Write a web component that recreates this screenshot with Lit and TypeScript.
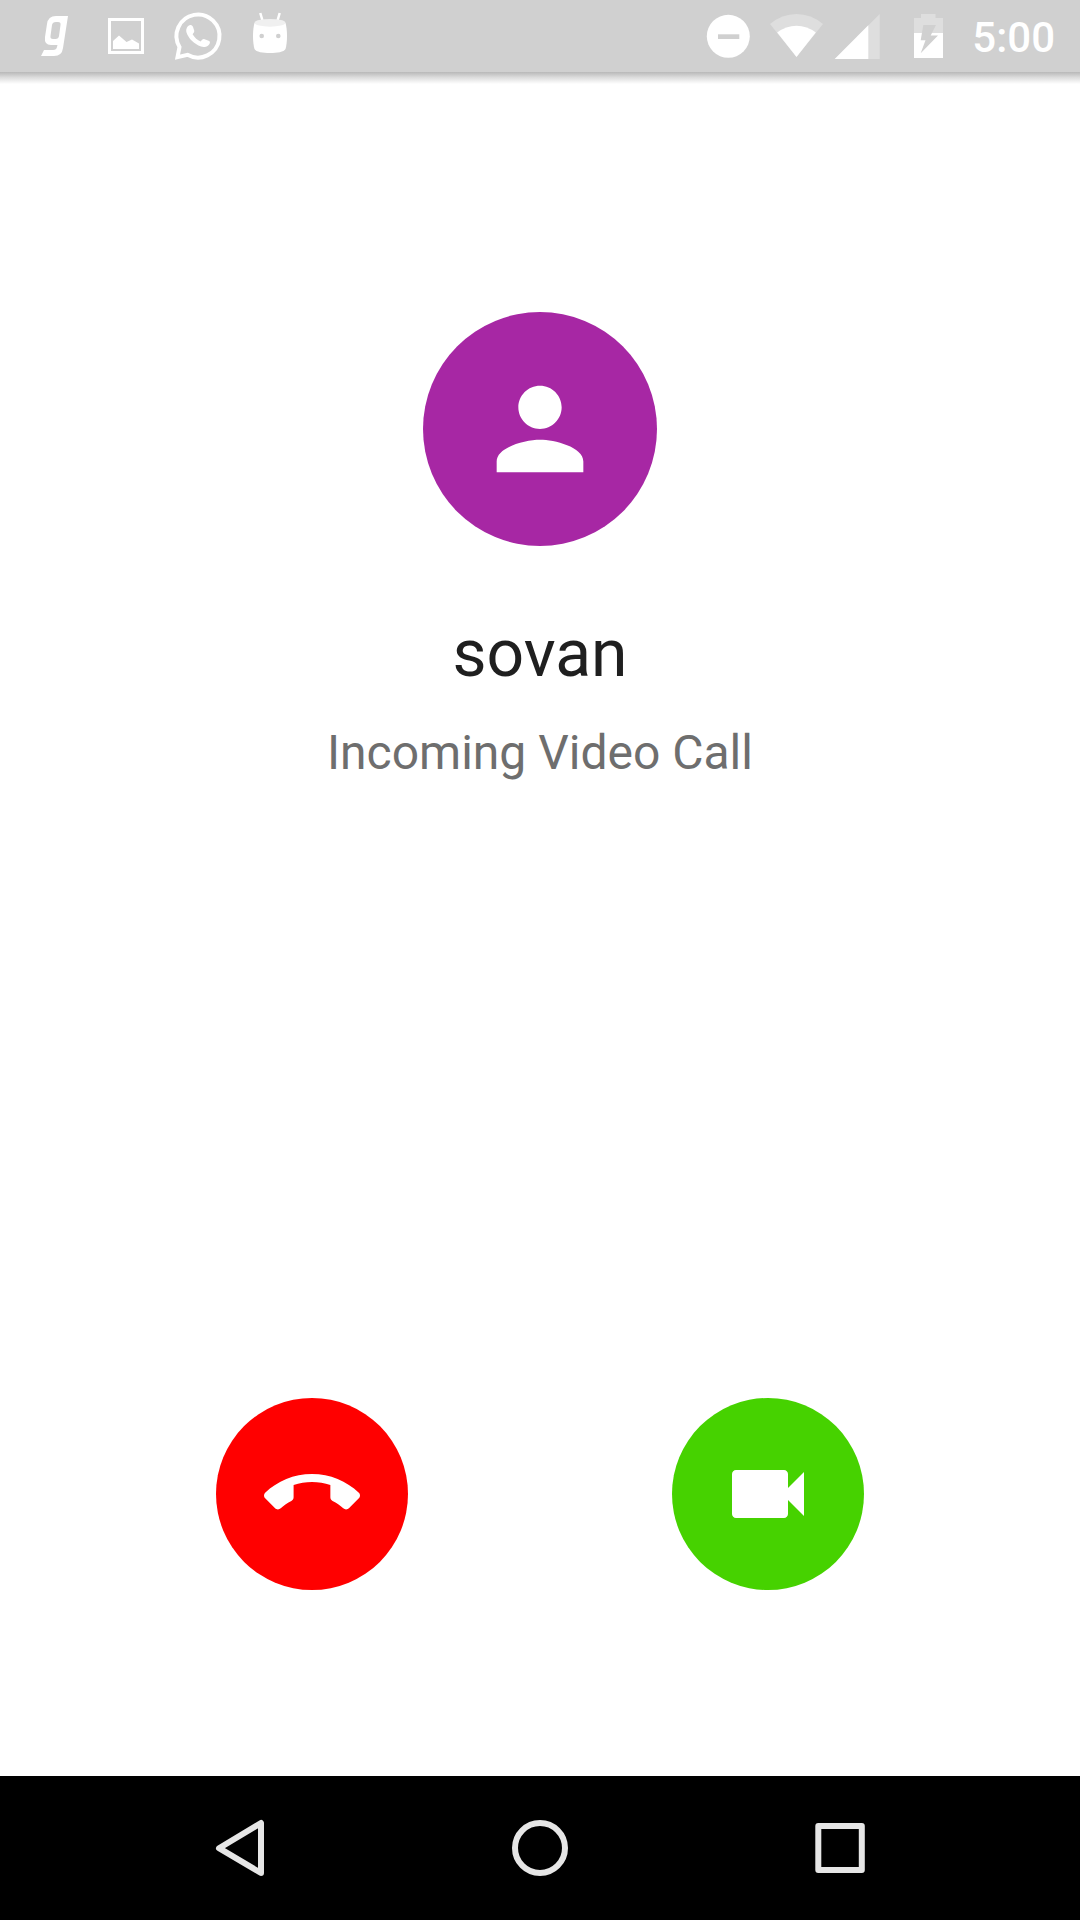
import { LitElement, html, css, svg } from "lit";
import { customElement, property } from "lit/decorators.js";

@customElement("status-bar")
export class StatusBar extends LitElement {
  @property() time = "";

  static styles = css`
    :host {
      display: block;
      background: #d0d0d0;
    }
    .bar {
      display: flex;
      justify-content: space-between;
      height: 72px;
      padding: 0 25px 0 18px;
    }
    .group {
      display: flex;
      align-items: center;
    }
    .icon {
      display: block;
      height: 72px;
      fill: #fff;
    }
    .faint {
      fill: #dedede;
    }
    .cutout {
      fill: #d0d0d0;
    }
    .line {
      fill: none;
      stroke: #fff;
    }
    .time {
      padding-top: 4px;
      color: #fff;
      font-size: 42px;
      font-weight: 500;
      line-height: 48px;
    }
  `;

  private icon(width: number, label: string, shape: unknown) {
    return html`<svg class="icon" width=${width} height="72" viewBox="0 0 ${width} 72" role="img" aria-label=${label}>${shape}</svg>`;
  }

  render() {
    return html`
      <div class="bar">
        <div class="group">
          ${this.icon(72, "Music", svg`
            <path fill-rule="evenodd" d="M50 16H38Q30 16 29 24L27 37Q26 45 33 45H39.500L39 47Q38.500 50 35 50H26L23 56H36Q44 56 45 48ZM38 22H40Q43 22 42.500 25L41 36Q40.500 39 37.500 39H35Q32 39 32.500 36L34 25Q34.500 22 38 22Z"/>`)}
          ${this.icon(72, "Picture", svg`
            <rect class="line" x="19.500" y="19.500" width="33" height="33" stroke-width="3"/>
            <path d="M23 49V41L29 35.500L36.500 42L42 39.500L49 43.500V49Z"/>`)}
          ${this.icon(72, "WhatsApp", svg`
            <path class="line" stroke-width="4" d="M17.500 47A21.500 21.500 0 1 1 25.500 54.800L15.500 57.200Z"/>
            <path d="M25 27.500C26 25.500 28 24.500 29.500 25.300C31 26 31.500 28.500 32.200 30.500C32.600 32 31.500 33 30.600 34.200C32.500 37.500 35.500 40.200 38.700 41.400C39.800 40.200 40.600 38.800 42 39L47.200 41C48.800 42 47.500 44.500 46.200 45.400C44 47 41.500 47.400 39 46.500C32 44 26.500 38.500 24.500 32.500C24 30.500 24.200 29 25 27.500Z"/>`)}
          ${this.icon(72, "Android", svg`
            <path class="line" stroke-width="2.500" d="M26.300 13L28.600 21M45.700 13L43.400 21"/>
            <path d="M20.500 23H51.500C53.500 30 53.500 42 51.500 49C50 52 43 53 36 53S22 52 20.500 49C18.500 42 18.500 30 20.500 23Z"/>
            <ellipse cx="36" cy="22.800" rx="15.500" ry="3.900" fill="#f0f0f0"/>
            <circle class="cutout" cx="27.700" cy="36" r="2.300"/>
            <circle class="cutout" cx="44.300" cy="36" r="2.300"/>`)}
        </div>
        <div class="group">
          ${this.icon(60, "Do not disturb", svg`
            <circle cx="26.300" cy="36.300" r="21.500"/>
            <rect class="cutout" x="16" y="34.300" width="21.300" height="4.700"/>`)}
          ${this.icon(70, "Wi-Fi", svg`
            <path class="faint" d="M34.500 57L8 24Q20 14 34.500 14T61 24Z"/>
            <path d="M34.500 57L15.200 32.500Q24 25.700 34.500 25.700T53.800 32.500Z"/>`)}
          ${this.icon(70, "Mobile signal", svg`
            <path class="faint" d="M2.700 59L47.700 14V59Z"/>
            <path d="M2.700 59L36.300 25.300V59Z"/>`)}
          ${this.icon(70, "Battery charging", svg`
            <path class="faint" d="M12 18H19V14H33.500V18H41V34H12Z"/>
            <path d="M12 33H41V58H12Z"/>
            <path class="cutout" d="M21.300 25H34L28.700 35.500H36L18.700 53.300L23.500 40.300H18.700Z"/>`)}
          <span class="time">${this.time}</span>
        </div>
      </div>
    `;
  }
}

@customElement("nav-bar")
export class NavBar extends LitElement {
  static styles = css`
    :host {
      display: block;
      background: #000;
    }
    .bar {
      display: grid;
      grid-template-columns: repeat(3, 1fr);
      height: 144px;
      padding: 0 90px;
    }
    .key {
      display: flex;
      align-items: center;
      justify-content: center;
      padding: 0;
      border: 0;
      background: none;
      cursor: pointer;
    }
    .icon {
      display: block;
      width: 72px;
      height: 72px;
      fill: none;
      stroke: #e6e6e6;
      stroke-width: 6;
      stroke-linejoin: round;
    }
  `;

  render() {
    return html`
      <nav class="bar" aria-label="System">
        <button class="key" type="button" aria-label="Back">
          <svg class="icon" viewBox="0 0 72 72"><path d="M57 11V61L15 36.200Z"/></svg>
        </button>
        <button class="key" type="button" aria-label="Home">
          <svg class="icon" viewBox="0 0 72 72"><circle cx="36" cy="36" r="25"/></svg>
        </button>
        <button class="key" type="button" aria-label="Recent apps">
          <svg class="icon" viewBox="0 0 72 72"><rect x="14.300" y="14" width="43.500" height="44"/></svg>
        </button>
      </nav>
    `;
  }
}

@customElement("app-root")
export class AppRoot extends LitElement {
  @property() caller = "sovan";
  @property() status = "Incoming Video Call";

  static styles = css`
    :host {
      display: flex;
      flex-direction: column;
      min-height: 100vh;
      background: #fff;
      font-family: Roboto, "Liberation Sans", sans-serif;
    }
    .call {
      flex: 1;
      display: flex;
      flex-direction: column;
      justify-content: space-between;
      gap: 96px;
      padding: 240px 84px 186px;
      background: linear-gradient(#b8b8b8, #dcdcdc 45%, #fff) top / 100% 12px no-repeat;
    }
    .person {
      display: flex;
      flex-direction: column;
      align-items: center;
      text-align: center;
    }
    .avatar {
      display: flex;
      align-items: center;
      justify-content: center;
      width: 234px;
      height: 234px;
      border-radius: 50%;
      background: #a727a4;
    }
    .avatar-icon {
      width: 130px;
      height: 130px;
      fill: #fff;
    }
    .name {
      margin: 69px 0 32px;
      color: #1f1f1f;
      font-size: 66px;
      font-weight: 400;
      line-height: 78px;
    }
    .status {
      margin: 0;
      color: #6e6e6e;
      font-size: 48px;
      line-height: 56px;
    }
    .actions {
      display: grid;
      grid-template-columns: 1fr 1fr;
      justify-items: center;
    }
    .action {
      display: flex;
      align-items: center;
      justify-content: center;
      width: 192px;
      height: 192px;
      padding: 0;
      border: 0;
      border-radius: 50%;
      cursor: pointer;
    }
    .decline {
      background: #f00;
    }
    .accept {
      background: #46d200;
    }
    .action-icon {
      width: 96px;
      height: 96px;
      fill: #fff;
    }
  `;

  render() {
    return html`
      <status-bar time="5:00"></status-bar>
      <main class="call">
        <section class="person">
          <div class="avatar">
            <svg class="avatar-icon" viewBox="0 0 24 24" aria-hidden="true">
              <path d="M12 12c2.210 0 4-1.790 4-4s-1.790-4-4-4-4 1.790-4 4 1.790 4 4 4zm0 2c-2.670 0-8 1.340-8 4v2h16v-2c0-2.660-5.330-4-8-4z"/>
            </svg>
          </div>
          <h1 class="name">${this.caller}</h1>
          <p class="status">${this.status}</p>
        </section>
        <div class="actions">
          <button class="action decline" type="button" aria-label="Decline">
            <svg class="action-icon" viewBox="0 0 24 24">
              <path d="M12 9c-1.600 0-3.150.25-4.600.72v3.100c0 .39-.23.74-.56.9-.98.49-1.870 1.120-2.660 1.850-.18.18-.43.28-.7.28-.28 0-.53-.11-.71-.29L.29 13.080c-.18-.17-.29-.42-.29-.7 0-.28.11-.53.29-.71C3.340 8.780 7.460 7 12 7s8.660 1.780 11.710 4.670c.18.18.29.43.29.71 0 .28-.11.53-.29.71l-2.480 2.480c-.18.18-.43.29-.71.29-.27 0-.52-.11-.7-.28-.79-.74-1.690-1.360-2.670-1.850-.33-.16-.56-.5-.56-.9v-3.100C15.150 9.250 13.600 9 12 9z"/>
            </svg>
          </button>
          <button class="action accept" type="button" aria-label="Accept video call">
            <svg class="action-icon" viewBox="0 0 24 24">
              <path d="M17 10.500V7c0-.55-.45-1-1-1H4c-.55 0-1 .45-1 1v10c0 .55.45 1 1 1h12c.55 0 1-.45 1-1v-3.500l4 4v-11l-4 4z"/>
            </svg>
          </button>
        </div>
      </main>
      <nav-bar></nav-bar>
    `;
  }
}
